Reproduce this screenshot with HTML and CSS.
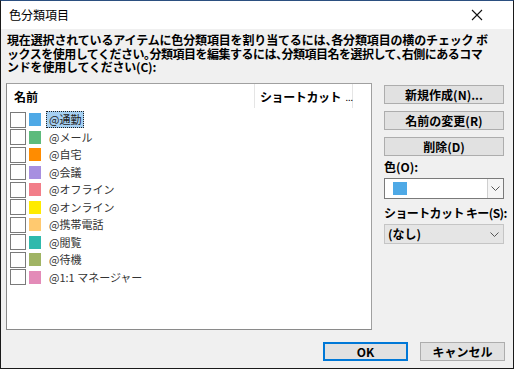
FILE: index.html
```html
<!DOCTYPE html>
<html lang="ja">
<head>
<meta charset="utf-8">
<title>色分類項目</title>
<link rel="stylesheet" href="styles.css">
</head>
<body>
<div class="window">
  <div class="titlebar">
    <span class="title">色分類項目</span>
    <span class="close"><svg width="12" height="12" viewBox="0 0 12 12"><path d="M1 1 L11 11 M11 1 L1 11" stroke="#111" stroke-width="1.1" fill="none"/></svg></span>
  </div>
  <div class="client">
    <div class="desc">
      <span class="line l1">現在選択されているアイテムに色分類項目を割り当てるには<span class="p">、</span>各分類項目の横のチェック ボ</span>
      <span class="line l2">ックスを使用してください<span class="p">。</span>分類項目を編集するには<span class="p">、</span>分類項目名を選択して<span class="p">、</span>右側にあるコマ</span>
      <span class="line l3">ンドを使用してください(C):</span>
    </div>
    <div class="main">
      <div class="list">
        <div class="list-head">
          <div class="col-name">名前</div>
          <div class="col-short">ショートカット <span class="dots">...</span></div>
          <div class="col-rest"></div>
        </div>
        <div class="rows">
          <div class="row"><span class="check"></span><span class="swatch c1"></span><span class="label selected">@通勤</span></div>
          <div class="row"><span class="check"></span><span class="swatch c2"></span><span class="label">@メール</span></div>
          <div class="row"><span class="check"></span><span class="swatch c3"></span><span class="label">@自宅</span></div>
          <div class="row"><span class="check"></span><span class="swatch c4"></span><span class="label">@会議</span></div>
          <div class="row"><span class="check"></span><span class="swatch c5"></span><span class="label">@オフライン</span></div>
          <div class="row"><span class="check"></span><span class="swatch c6"></span><span class="label">@オンライン</span></div>
          <div class="row"><span class="check"></span><span class="swatch c7"></span><span class="label">@携帯電話</span></div>
          <div class="row"><span class="check"></span><span class="swatch c8"></span><span class="label">@閲覧</span></div>
          <div class="row"><span class="check"></span><span class="swatch c9"></span><span class="label">@待機</span></div>
          <div class="row"><span class="check"></span><span class="swatch c10"></span><span class="label">@1:1 マネージャー</span></div>
        </div>
      </div>
      <div class="side">
        <button class="btn">新規作成(N)...</button>
        <button class="btn">名前の変更(R)</button>
        <button class="btn">削除(D)</button>
        <div class="field-label">色(O):</div>
        <div class="combo white">
          <span class="combo-swatch"></span>
          <span class="combo-arrow"><svg width="9" height="5" viewBox="0 0 9 5"><path d="M0.5 0.5 L4.5 4.5 L8.5 0.5" stroke="#555" fill="none"/></svg></span>
        </div>
        <div class="field-label tight">ショートカット キー(S):</div>
        <div class="combo grey">
          <span class="combo-text">(なし)</span>
          <span class="combo-chev"><svg width="9" height="5" viewBox="0 0 9 5"><path d="M0.5 0.5 L4.5 4.5 L8.5 0.5" stroke="#555" fill="none"/></svg></span>
        </div>
      </div>
    </div>
    <div class="footer">
      <button class="btn foot default">OK</button>
      <button class="btn foot">キャンセル</button>
    </div>
  </div>
</div>
</body>
</html>
```

FILE: styles.css
```css
* { box-sizing: border-box; }
html, body { margin: 0; padding: 0; }
body {
  width: 514px;
  height: 369px;
  font-family: "Noto Sans CJK JP", "Noto Sans", sans-serif;
  color: #000;
  background: #f0f0f0;
}
.window {
  width: 514px;
  height: 369px;
  border: 1px solid #1a1a1a;
  border-top-color: #2b4f80;
  display: flex;
  flex-direction: column;
  background: #f0f0f0;
}
.titlebar {
  height: 28px;
  background: #fff;
  display: flex;
  align-items: center;
  justify-content: space-between;
  padding: 0 30px 0 8px;
}
.title {
  font-size: 12px;
  line-height: 14px;
}
.close {
  display: flex;
  width: 12px;
  height: 12px;
}
.client {
  flex: 1;
  display: flex;
  flex-direction: column;
}
.desc {
  padding: 4px 0 0 6px;
  font-size: 12px;
  line-height: 13.5px;
  font-weight: bold;
  white-space: nowrap;
  height: 54px;
  display: flex;
  flex-direction: column;
}
.line { display: block; height: 13.5px; }
.l1 { letter-spacing: -0.15px; }
.l2 { letter-spacing: -0.5px; }
.l3 { letter-spacing: -0.2px; }
.p { font-feature-settings: "halt"; }
.main {
  display: flex;
  align-items: flex-start;
  padding-left: 5px;
}
.list {
  width: 366px;
  height: 247px;
  background: #fff;
  border: 1px solid #a0a0a0;
  border-left-color: #8a8a8a;
  border-bottom-color: #8a8a8a;
}
.list-head {
  display: flex;
  height: 24px;
  align-items: stretch;
}
.col-name {
  width: 247px;
  padding-left: 7px;
  font-size: 12px;
  font-weight: bold;
  display: flex;
  align-items: center;
}
.col-short {
  width: 99px;
  border-left: 1px solid #e5e5e5;
  border-right: 1px solid #e5e5e5;
  padding-left: 5px;
  font-size: 12px;
  font-weight: bold;
  letter-spacing: -0.4px;
  display: flex;
  align-items: center;
  white-space: pre;
}
.dots {
  font-size: 9px;
  font-weight: normal;
  letter-spacing: 0;
  margin-left: 2px;
  padding-top: 3px;
}
.rows {
  padding: 3px 0 0 3px;
}
.row {
  display: flex;
  align-items: center;
  height: 17.5px;
}
.check {
  width: 16px;
  height: 16px;
  border: 1px solid #7a7a7a;
  background: #fff;
  flex: none;
}
.swatch {
  width: 14px;
  height: 15px;
  margin-left: 2px;
  border: 1px solid #fff;
  flex: none;
}
.c1 { background: #4ea9e6; }
.c2 { background: #5dbb7c; }
.c3 { background: #ff8c00; }
.c4 { background: #a78fe0; }
.c5 { background: #f27e89; }
.c6 { background: #ffeb00; }
.c7 { background: #ffc96f; }
.c8 { background: #2fb9ac; }
.c9 { background: #a0b464; }
.c10 { background: #e38bb8; }
.label {
  margin-left: 4px;
  font-size: 11px;
  line-height: 13px;
  color: #333;
  padding: 1px 2px;
  border: 1px dotted transparent;
  white-space: nowrap;
}
.label.selected {
  background: #a6d0f2;
  border-color: #222;
  color: #222;
}
.side {
  width: 120px;
  margin-left: 12px;
  padding-top: 2px;
  display: flex;
  flex-direction: column;
}
.btn {
  font-family: "Noto Sans CJK JP", "Noto Sans", sans-serif;
  font-size: 12px;
  font-weight: bold;
  height: 19px;
  padding: 0;
  line-height: 15px;
  background: #e1e1e1;
  border: 1px solid #adadad;
  color: #000;
}
.side .btn + .btn { margin-top: 7px; }
.field-label {
  font-size: 12px;
  font-weight: bold;
  line-height: 14px;
  margin-top: 4px;
  white-space: pre;
}
.field-label.tight { letter-spacing: -0.6px; }
.combo {
  height: 21px;
  margin-top: 4px;
  display: flex;
  align-items: stretch;
}
.combo.white {
  background: #fff;
  border: 1px solid #7a7a7a;
  margin-bottom: 3px;
}
.combo-swatch {
  width: 14px;
  height: 13px;
  background: #4ea9e6;
  margin: 3px 0 0 8px;
}
.combo-arrow {
  margin-left: auto;
  width: 16px;
  border-left: 1px solid #cfcfcf;
  background: #f5f5f5;
  display: flex;
  align-items: center;
  justify-content: center;
}
.combo.grey {
  background: #e5e5e5;
  border: 1px solid #c5c5c5;
  height: 20px;
}
.combo-text {
  font-size: 12px;
  font-weight: bold;
  padding-left: 3px;
  line-height: 18px;
}
.combo-chev {
  margin-left: auto;
  width: 17px;
  display: flex;
  align-items: center;
  justify-content: center;
}
.footer {
  display: flex;
  justify-content: flex-end;
  gap: 12px;
  padding: 12px 8px 0 0;
}
.btn.foot {
  width: 85px;
}
.btn.default {
  border: 2px solid #0078d7;
  line-height: 13px;
}
```
